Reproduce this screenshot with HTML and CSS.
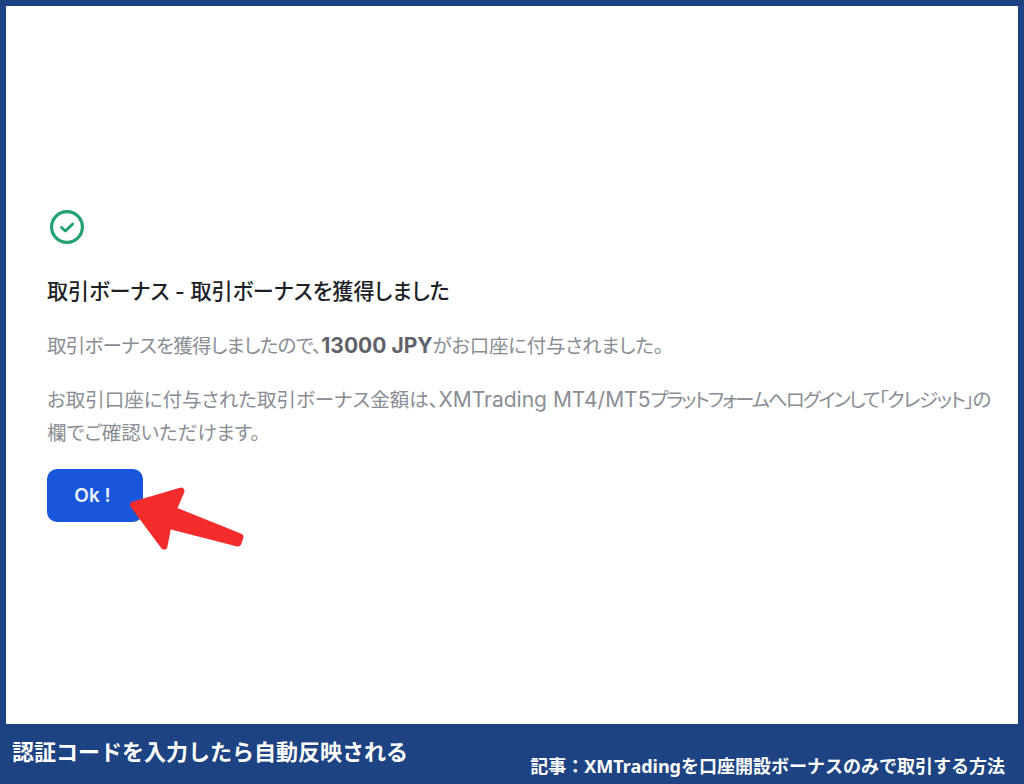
FILE: index.html
```html
<!DOCTYPE html>
<html lang="ja">
<head>
<meta charset="utf-8">
<title>取引ボーナス</title>
<link rel="stylesheet" href="styles.css">
</head>
<body>
<div class="frame">
  <main class="panel">
    <svg class="check" viewBox="0 0 36 36" width="36" height="36" aria-hidden="true">
      <circle cx="18" cy="18" r="15.4" fill="none" stroke="#22a06f" stroke-width="3.2"/>
      <path d="M12.5 18.5l3.8 3.6 7.4-7.2" fill="none" stroke="#22a06f" stroke-width="2.8" stroke-linecap="round" stroke-linejoin="round"/>
    </svg>
    <h1 class="title">取引ボーナス - 取引ボーナスを獲得しました</h1>
    <p class="msg first"><span class="tight-a">取引ボーナスを獲得しましたので、</span><b class="lat">13000 JPY</b><span class="tight-c">がお口座に付与されました。</span></p>
    <p class="msg second">お取引口座に付与された取引ボーナス金額は、<span class="lat">XMTrading MT4/MT5</span><span class="tight-b">プラットフォームへログインして</span><span class="tight-d">「クレジット」の</span>欄でご確認いただけます。</p>
    <div class="action">
      <button class="ok">Ok !</button>
      <svg class="arrow" viewBox="0 0 120 70" width="120" height="70" aria-hidden="true">
        <path d="M6.5 20L54 6 46 25 113 52 111 58 41 40 37 61Z" fill="#f52c2c" stroke="#f52c2c" stroke-width="7" stroke-linejoin="round"/>
      </svg>
    </div>
  </main>
  <footer class="bar">
    <div class="cap">認証コードを入力したら自動反映される</div>
    <div class="src">記事：XMTradingを口座開設ボーナスのみで取引する方法</div>
  </footer>
</div>
</body>
</html>
```

FILE: styles.css
```css
* { box-sizing: border-box; }
html, body { margin: 0; padding: 0; }
body {
  width: 1024px;
  height: 784px;
  overflow: hidden;
  background: #1d4382;
  font-family: Inter, "Noto Sans CJK JP", sans-serif;
}
.frame {
  display: flex;
  flex-direction: column;
  height: 784px;
  padding: 6px 6px 0;
}
.panel {
  height: 718px;
  flex: none;
  background: #fff;
  padding: 203px 0 0 41px;
  display: flex;
  flex-direction: column;
  align-items: flex-start;
}
.check { display: block; margin-left: 2px; }
.title {
  margin: 33px 0 0;
  font-size: 21.1px;
  line-height: 28px;
  font-weight: 500;
  color: #1c1f26;
  font-feature-settings: "palt";
}
.msg {
  margin: 0;
  font-size: 19.5px;
  line-height: 33px;
  color: #8a8d93;
  width: 958px;
  font-feature-settings: "palt";
}
.lat { font-size: 21px; line-height: 1; }
.tight-a { letter-spacing: -0.7px; }
.tight-b { letter-spacing: -2px; }
.tight-c { letter-spacing: -0.3px; }
.tight-d { letter-spacing: -1.4px; }
.msg b { font-weight: 700; color: #5f6268; }
.first { margin-top: 24px; }
.second { margin-top: 21px; }
.action { position: relative; margin-top: 19px; }
.ok {
  display: block;
  width: 96px;
  height: 53px;
  padding: 0 5px 0 0;
  border: 0;
  border-radius: 10px;
  background: #1a56db;
  color: #e8f0ff;
  font: 600 19px Inter, sans-serif;
}
.arrow { position: absolute; left: 80px; top: 16px; }
.bar {
  flex: 1;
  margin: 0 -6px;
  position: relative;
  color: #fff;
  font-weight: 700;
}
.cap { position: absolute; left: 12px; top: 12px; font-size: 22px; line-height: 32px; font-weight: 700; }
.src { position: absolute; right: 19px; top: 29px; font-family: "Noto Sans", "Noto Sans CJK JP", sans-serif; font-size: 18px; line-height: 26px; }
```
